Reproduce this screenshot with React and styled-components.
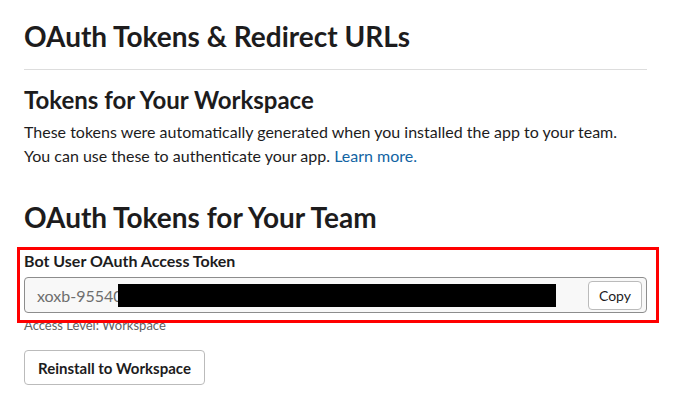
import React from 'react';
import styled, { createGlobalStyle } from 'styled-components';

const GlobalStyle = createGlobalStyle`
  html, body {
    margin: 0;
    padding: 0;
    background: #fff;
  }
  body {
    font-family: Lato, "Open Sans", sans-serif;
    color: #1d1c1d;
  }
`;

const Page = styled.div`
  width: 623px;
  padding: 18px 0 0 24px;
`;

const PageTitle = styled.h1`
  margin: 0;
  font-size: 28px;
  line-height: 36px;
  font-weight: 700;
  padding-bottom: 15px;
  border-bottom: 1px solid #dddddd;
`;

const SubTitle = styled.h2`
  margin: 15px 0 0 0;
  font-size: 24px;
  line-height: 30px;
  font-weight: 700;
`;

const Description = styled.p`
  margin: 5px 0 0 0;
  font-size: 16px;
  line-height: 24px;
  color: #1d1c1d;

  a {
    color: #1264a3;
    text-decoration: none;
  }
`;

const SectionTitle = styled.h1`
  margin: 31px 0 0 0;
  font-size: 28px;
  line-height: 36px;
  font-weight: 700;
`;

const TokenField = styled.div`
  position: relative;
  margin-top: 16px;
`;

const Highlight = styled.div`
  position: absolute;
  top: -4px;
  left: -7px;
  right: -12px;
  bottom: -10px;
  border: 3.5px solid #ff0000;
  pointer-events: none;
`;

const Label = styled.div`
  font-size: 16px;
  line-height: 20px;
  font-weight: 700;
`;

const TokenBox = styled.div`
  display: flex;
  align-items: center;
  justify-content: space-between;
  margin-top: 6px;
  height: 36px;
  box-sizing: border-box;
  padding: 0 4px 0 12px;
  border: 1px solid #8d8d8d;
  border-radius: 4px;
  background: #f8f8f8;
`;

const TokenValue = styled.div`
  display: flex;
  align-items: center;
  font-size: 16px;
  color: #6e6e6e;
`;

const Redacted = styled.span`
  display: inline-block;
  margin-left: -5px;
  width: 438px;
  height: 23px;
  background: #000;
`;

const SmallButton = styled.button`
  height: 29px;
  padding: 0 10px;
  border: 1px solid #bbbbbb;
  border-radius: 4px;
  background: #fff;
  font-family: Lato, sans-serif;
  font-size: 14px;
  color: #1d1c1d;
`;

const Meta = styled.div`
  margin-top: 4px;
  font-size: 13px;
  line-height: 16px;
  color: #616061;
`;

const Button = styled.button`
  margin-top: 17px;
  height: 35px;
  padding: 0 13px;
  border: 1px solid #bbbbbb;
  border-radius: 4px;
  background: #fff;
  font-family: Lato, sans-serif;
  font-size: 15px;
  font-weight: 700;
  color: #1d1c1d;
`;

export default function App() {
  return (
    <>
      <GlobalStyle />
      <Page>
        <PageTitle>OAuth Tokens &amp; Redirect URLs</PageTitle>
        <SubTitle>Tokens for Your Workspace</SubTitle>
        <Description>
          These tokens were automatically generated when you installed the app to your team.
          <br />
          You can use these to authenticate your app. <a href="#">Learn more.</a>
        </Description>
        <SectionTitle>OAuth Tokens for Your Team</SectionTitle>
        <TokenField>
          <Label>Bot User OAuth Access Token</Label>
          <TokenBox>
            <TokenValue>
              xoxb-95540
              <Redacted />
            </TokenValue>
            <SmallButton>Copy</SmallButton>
          </TokenBox>
          <Highlight />
        </TokenField>
        <Meta>Access Level: Workspace</Meta>
        <Button>Reinstall to Workspace</Button>
      </Page>
    </>
  );
}
